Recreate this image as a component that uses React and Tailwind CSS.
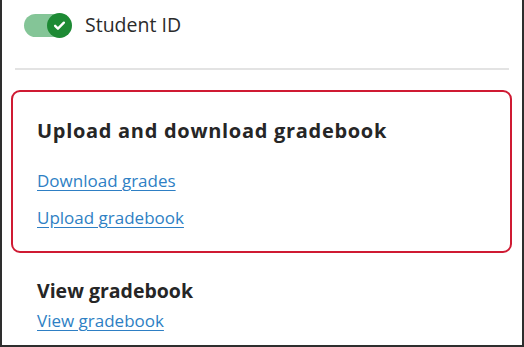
export default function App() {
  return (
    <div
      className="w-[524px] h-[347px] overflow-hidden bg-white border-l-2 border-r-2 border-b-2 border-[#2e2e2e] text-[#2b2b2b]"
      style={{ fontFamily: '"Open Sans", "Noto Sans", sans-serif' }}
    >
      <div className="flex items-center h-[50px] pl-[22px]">
        <div className="relative w-[48px] h-[25px] shrink-0">
          <div className="absolute left-0 top-[1px] w-[40px] h-[23px] rounded-full bg-[#84c597]" />
          <div className="absolute right-0 top-0 w-[25px] h-[25px] rounded-full bg-[#1d8a34] flex items-center justify-center">
            <svg viewBox="0 0 24 24" className="w-[15px] h-[15px]" fill="none" stroke="white" strokeWidth="3.8" strokeLinecap="round" strokeLinejoin="round">
              <path d="M5 12.5l4.5 4.5L19 7.5" />
            </svg>
          </div>
        </div>
        <span className="ml-[13px] text-[19.5px] leading-none">Student ID</span>
      </div>
      <div className="mx-[13px] mt-[18px] h-[2px] bg-[#e3e3e3]" />
      <div className="ml-[9px] mr-[10px] mt-[20px] h-[163px] rounded-[9px] border-[2.5px] border-[#cf1a33] px-[24px] pt-[25px]">
        <h2 className="text-[20px] font-bold leading-[28px] tracking-[0.7px] text-[#262626]">Upload and download gradebook</h2>
        <div className="mt-[24px] flex flex-col gap-[14px] items-start">
          <a href="#" className="text-[17px] leading-[23px] text-[#2e7fc4] underline underline-offset-[3px]">Download grades</a>
          <a href="#" className="text-[17px] leading-[23px] text-[#2e7fc4] underline underline-offset-[3px]">Upload gradebook</a>
        </div>
      </div>
      <div className="pl-[35px] pt-[24px]">
        <h2 className="text-[19.5px] font-bold leading-[28px] text-[#262626]">View gradebook</h2>
        <a href="#" className="block mt-[4px] text-[17px] leading-[23px] text-[#2e7fc4] underline underline-offset-[3px]">View gradebook</a>
      </div>
    </div>
  );
}
